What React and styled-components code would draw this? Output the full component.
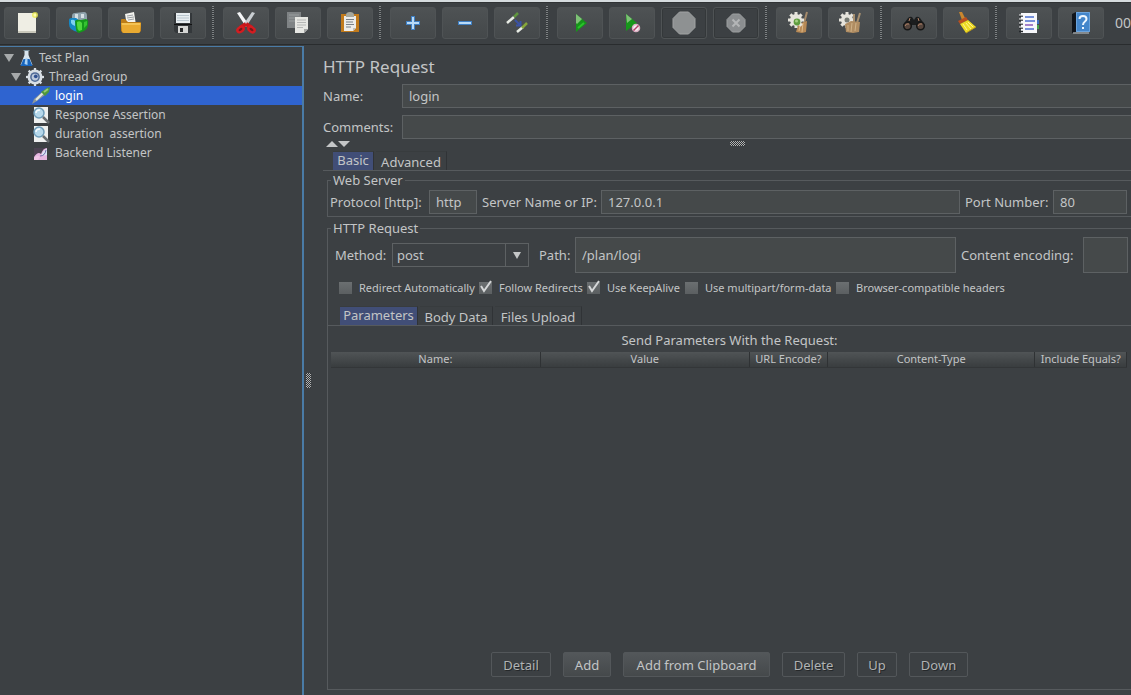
import React from "react";
import styled, { createGlobalStyle, css } from "styled-components";

const c = {
  bg: "#3c4043",
  field: "#45494a",
  line: "#565a5d",
  dark: "#303336",
  text: "#c3c5c6",
  focus: "#4a7ba6",
  select: "#2f64d0",
  tab: "#414e77",
};

const Global = createGlobalStyle`
  *, *::before, *::after { box-sizing: border-box; }
  body {
    margin: 0;
    background: ${c.bg};
    color: ${c.text};
    font: 13px/18px "Noto Sans", "Open Sans", sans-serif;
  }
  button, input, select { font: inherit; color: inherit; }
`;

const Window = styled.div`
  display: flex;
  flex-direction: column;
  min-height: 100vh;
  overflow: hidden;
  border-top: 2px solid #d5dbde;
`;

/* ---------- toolbar ---------- */
const Toolbar = styled.header`
  display: flex;
  align-items: center;
  gap: 6px;
  height: 43px;
  padding: 0 0 0 4px;
  overflow: hidden;
  border-bottom: 1px solid #292c2e;
  box-shadow: inset 0 1px 0 #303335;
`;

const ToolButton = styled.button`
  flex: none;
  display: flex;
  align-items: center;
  justify-content: center;
  width: 46px;
  height: 32px;
  padding: 0;
  border: 1px solid #4f5355;
  border-radius: 3px;
  background: linear-gradient(#4e5254, #44484a);
  ${(p) => p.disabled && css`background: ${c.bg}; box-shadow: inset 0 0 0 1px #34383a;`}
`;

const Separator = styled.span`
  flex: none;
  width: 5px;
  height: 34px;
  background: repeating-linear-gradient(#7d8183 0 1px, #33373a 1px 2px) 0 0 / 2px 100% no-repeat;
`;

const Timer = styled.output`
  flex: none;
  padding-left: 5px;
  font-size: 14px;
`;

const Svg = styled.svg`
  display: block;
  flex: none;
`;

/* ---------- split body ---------- */
const Body = styled.div`
  flex: 1;
  display: flex;
  min-height: 0;
`;

const TreePane = styled.nav`
  flex: none;
  width: 304px;
  margin-top: 1px;
  border: solid ${c.focus};
  border-width: 1px 2px 0 0;
  padding-top: 1px;
`;

const TreeRow = styled.button`
  display: flex;
  align-items: center;
  gap: 5px;
  width: 100%;
  height: 19px;
  padding: 0 0 0 ${(p) => p.$indent}px;
  border: 0;
  background: ${(p) => (p.$active ? c.select : "transparent")};
  color: ${(p) => (p.$active ? "#fff" : c.text)};
  font-size: 12px;
  white-space: pre;
  text-align: left;
`;

const Splitter = styled.div`
  flex: none;
  width: 19px;
  display: flex;
  align-items: center;
  padding: 20px 0 0 2px;
`;

const Grip = styled.span`
  width: ${(p) => (p.$across ? 15 : 5)}px;
  height: ${(p) => (p.$across ? 5 : 15)}px;
  background: repeating-conic-gradient(#b0b2b3 0 25%, #2e3133 0 50%) 0 0 / 2px 2px;
`;

const Editor = styled.main`
  flex: 1;
  min-width: 0;
  display: flex;
  flex-direction: column;
  padding-top: 10px;
`;

const Title = styled.h1`
  margin: 0 0 5px;
  font-size: 17px;
  line-height: 24px;
  font-weight: 400;
`;

const FormRow = styled.div`
  display: flex;
  align-items: center;
  margin-bottom: ${(p) => (p.$last ? 0 : 7)}px;
`;

const Label = styled.label`
  flex: none;
  width: ${(p) => p.$w}px;
  white-space: nowrap;
`;

const Field = styled.input`
  flex: ${(p) => (p.$w ? "none" : "1")};
  width: ${(p) => (p.$w ? p.$w + "px" : "auto")};
  min-width: 0;
  height: ${(p) => (p.$tall ? 36 : 24)}px;
  margin-right: ${(p) => p.$gap || 0}px;
  padding: 0 6px;
  border: 1px solid #5d6163;
  border-right-width: ${(p) => (p.$bleed ? 0 : 1)}px;
  background: ${c.field};
  outline: 0;
`;

const Divider = styled.div`
  display: flex;
  align-items: flex-start;
  height: 12px;
  padding-left: 3px;
`;

const GripSlot = styled.span`
  flex: 1;
  display: flex;
  justify-content: center;
  padding: 2px 6px 0 0;
`;

/* ---------- tabs ---------- */
const Tabs = styled.div`
  display: flex;
  align-items: flex-end;
  gap: 2px;
  padding: 0 0 0 ${(p) => p.$inset}px;
  border-bottom: 1px solid ${c.line};
`;

const Tab = styled.button`
  height: 19px;
  width: ${(p) => p.$w}px;
  padding: ${(p) => (p.$active ? "0 0 2px" : "1px 0 0")};
  border: 0;
  border-right: 1px solid ${c.dark};
  border-top: 1px solid #383c3e;
  background: ${(p) => (p.$active ? c.tab : "transparent")};
  line-height: 16px;
  white-space: nowrap;
`;

/* ---------- groups ---------- */
const Group = styled.fieldset`
  margin: ${(p) => p.$margin};
  padding: 0;
  min-width: 0;
  border: 1px solid ${c.line};
  border-right: 0;
  ${(p) => p.$fill && css`flex: 1; display: flex; flex-direction: column;`}
`;

const Legend = styled.legend`
  margin-left: 3px;
  padding: 0 2px;
`;

const ServerRow = styled.div`
  display: flex;
  align-items: center;
  padding: 1px 4px 2px 2px;
`;

const PathRow = styled.div`
  display: flex;
  align-items: center;
  padding: 0 3px 0 7px;
`;

const SelectBox = styled.div`
  flex: none;
  display: grid;
  grid-template-columns: 1fr 22px;
  align-items: center;
  width: 137px;
  height: 24px;
  margin-right: 10px;
  border: 1px solid #5d6163;
`;

const Select = styled.select`
  grid-area: 1 / 1 / 2 / 3;
  height: 22px;
  padding: 0 4px;
  border: 0;
  appearance: none;
  background: linear-gradient(#5d6163, #5d6163) right 22px top / 1px 100% no-repeat;
  outline: 0;
`;

const SelectArrow = styled(Svg)`
  grid-area: 1 / 2 / 2 / 3;
  justify-self: center;
  pointer-events: none;
`;

const Checks = styled.div`
  display: flex;
  height: 16px;
  margin: 7px 0 10px 11px;
`;

const CheckLabel = styled.label`
  display: flex;
  align-items: center;
  gap: 7px;
  width: ${(p) => p.$w}px;
  font-size: 11px;
  line-height: 16px;
  white-space: nowrap;
`;

const Check = styled.input`
  appearance: none;
  flex: none;
  width: 13px;
  height: 12px;
  margin: 0;
  background: linear-gradient(#6b6f71, #5b5f61);
`;

const CheckCell = styled.span`
  display: grid;
  align-items: center;
  > * { grid-area: 1 / 1; }
  svg { pointer-events: none; margin-top: -3px; }
`;

const Caption = styled.div`
  margin: 5px 0 3px;
  text-align: center;
`;

const Table = styled.table`
  width: calc(100% - 7px);
  margin-left: 3px;
  table-layout: fixed;
  border-collapse: collapse;
`;

const Th = styled.th`
  width: ${(p) => p.$w};
  height: 15px;
  padding: 0;
  border-right: 1px solid #2f3234;
  border-bottom: 1px solid #333638;
  background: linear-gradient(#505456, #393d3f);
  font-size: 11px;
  line-height: 14px;
  font-weight: 400;
  white-space: nowrap;
`;

const Actions = styled.div`
  display: flex;
  justify-content: center;
  gap: 12px;
  margin: auto 0 12px;
`;

const Action = styled.button`
  height: 25px;
  width: ${(p) => p.$w}px;
  padding: 0;
  border: 1px solid #53575a;
  border-radius: 2px;
  background: linear-gradient(#53575a, #45494b);
  white-space: nowrap;
  ${(p) => p.disabled && css`background: ${c.bg}; color: #b0b3b4; text-shadow: 1px 1px 0 #25282a;`}
`;

/* ---------- icons ---------- */
const Icon = ({ size = 24, children }) => (
  <Svg width={size} height={size} viewBox="0 0 24 24" fill="none" aria-hidden="true">{children}</Svg>
);

const Gear = ({ cx = 8, cy = 10, r = 6, fill = "#e6e4dc" }) => (
  <g fill={fill}>
    <circle cx={cx} cy={cy} r={r} />
    {[0, 45, 90, 135].map((a) => (
      <rect key={a} x={cx - 1.5} y={cy - r - 2} width="3" height={2 * r + 4} transform={`rotate(${a} ${cx} ${cy})`} />
    ))}
  </g>
);

const NewIcon = () => (
  <Icon>
    <path d="M3 2H21V21H3Z" fill="#efeee4" />
    <path d="M3 20H21V22H3Z" fill="#c9c8bb" />
    <circle cx="20" cy="4" r="3" fill="#e8e84c" opacity=".8" />
    <circle cx="20" cy="4" r="1.5" fill="#fffcae" />
  </Icon>
);
const TemplatesIcon = () => (
  <Icon>
    <path d="M5 5Q5 2 8 2L17 1Q20 1 20 5V11H5Z" fill="#8fa3ad" />
    <path d="M8 3H11V8H8ZM14 3H17V7H14Z" fill="#d5dfe4" />
    <path d="M2 9Q2 7 5 7L9 7Q12 8 11 12V21Q8 21 4 18Q2 16 2 13Z" fill="#1587c4" />
    <path d="M4 9Q7 8 8 10L8 15Q5 14 4 12Z" fill="#7cd1ef" />
    <path d="M8 10Q10 8 14 9L19 8Q22 9 21 13Q21 18 17 20L12 22Q9 21 9 18Z" fill="#14991b" />
    <path d="M10 11Q13 9 15 12L15 19L12 20Q10 18 10 14Z" fill="#4fd83e" />
    <path d="M17 11L20 10L20 14L17 17Z" fill="#36c331" />
  </Icon>
);
const OpenIcon = () => (
  <Icon>
    <path d="M6 3L15 1L17 14L8 15Z" fill="#f3f3ef" />
    <path d="M8 5L14 4M8 7L15 6M9 9L15 8" stroke="#9ba1a5" />
    <path d="M2 9Q2 8 3 8H6L9 11H21Q22 11 22 12V20L20 22H4L2 20Z" fill="#bd7d17" />
    <path d="M2 12H22L21 21Q20 22 19 22H5Q3 22 3 20Z" fill="#e9aa31" />
    <path d="M3 13H21" stroke="#ffdc7b" />
  </Icon>
);
const SaveIcon = () => (
  <Icon>
    <path d="M3 2H21V22H5L3 20Z" fill="#34383b" />
    <path d="M5 2H19V12H5Z" fill="#e7edf0" />
    <path d="M6 4.500H18M6 7H18M6 9.500H18" stroke="#b9c6ce" />
    <path d="M7 15H17V22H7Z" fill="#d5d6d4" />
    <path d="M9 17H12V21H9Z" fill="#282a2c" />
    <path d="M3 13.500H21" stroke="#111" />
  </Icon>
);
const CutIcon = () => (
  <Icon>
    <path d="M3 2L6 1L15 14L12 16Z" fill="#f5f6f7" />
    <path d="M21 2L18 1L9 14L12 16Z" fill="#c9ced2" />
    <path d="M12 13L6 17M12 13L18 17" stroke="#c8171b" strokeWidth="4" />
    <ellipse cx="6.500" cy="18.500" rx="3.400" ry="2.300" fill="#701a1c" stroke="#d51c20" strokeWidth="2.400" transform="rotate(-35 6.500 18.500)" />
    <ellipse cx="17.500" cy="18.500" rx="3.400" ry="2.300" fill="#701a1c" stroke="#d51c20" strokeWidth="2.400" transform="rotate(35 17.500 18.500)" />
  </Icon>
);
const CopyIcon = () => (
  <Icon>
    <path d="M1 1H15V17H1Z" fill="#7f8385" />
    <path d="M3 4H13M3 7H11M3 10H9" stroke="#9a9e9f" />
    <path d="M9 6H22V18L18 22H9Z" fill="#e6e7e3" />
    <path d="M11 9H20M11 11.500H20M11 14H20M11 16.500H17" stroke="#b4b6b5" />
    <path d="M18 22V18H22Z" fill="#a4a6a5" />
  </Icon>
);
const PasteIcon = () => (
  <Icon>
    <path d="M3 3H21V21H3Z" fill="#c17b1d" />
    <path d="M6 5H18V17L15 20H6Z" fill="#ececea" />
    <path d="M8 4Q8 1 12 1Q16 1 16 4V6H8Z" fill="#a7a89d" />
    <path d="M8 8.500H16M8 11H15M8 13.500H16M8 16H13" stroke="#798086" />
    <path d="M15 20V17H18Z" fill="#bfc0bd" />
  </Icon>
);
const PlusIcon = () => (
  <Icon>
    <path d="M12 5V19M5 12H19" stroke="#3f7fc3" strokeWidth="4" />
    <path d="M12 6V18M6 12H18" stroke="#b8daf7" strokeWidth="2" />
  </Icon>
);
const MinusIcon = () => (
  <Icon>
    <path d="M5 12H19" stroke="#3f7fc3" strokeWidth="4" />
    <path d="M6 12H18" stroke="#b8daf7" strokeWidth="2" />
  </Icon>
);
const ToggleIcon = () => (
  <Icon>
    <path d="M2 12L9 6" stroke="#e8ece5" strokeWidth="2.500" />
    <path d="M9 6L13 2" stroke="#60963f" strokeWidth="2.500" />
    <path d="M12 21L18 16" stroke="#e8ece5" strokeWidth="2.500" />
    <path d="M17 17L22 12" stroke="#86a53b" strokeWidth="2.500" />
    <path d="M10 9L15 14M15.500 10V14.500H11" stroke="#3b53a5" strokeWidth="2" />
  </Icon>
);
const StartIcon = () => (
  <Icon>
    <path d="M8 3L19 12L8 21Z" fill="#16951a" />
    <path d="M8 3L14 8L9 13L8 12Z" fill="#7fc177" />
    <path d="M10 17L16 12" stroke="#29c32a" strokeWidth="2" />
  </Icon>
);
const NoPauseIcon = () => (
  <Icon>
    <path d="M6 3L17 12L6 20Z" fill="#17971b" />
    <path d="M6 3L12 8L7 12Z" fill="#7fc177" />
    <circle cx="16" cy="17" r="3.500" fill="#f3f0f1" stroke="#d9b0c3" strokeWidth="1.500" />
    <path d="M13.500 19.500L18.500 14.500" stroke="#b53d68" strokeWidth="1.500" />
  </Icon>
);
const StopIcon = () => (
  <Icon>
    <path d="M7.500 1H16.500L23 7.500V16.500L16.500 23H7.500L1 16.500V7.500Z" fill="#8e9192" stroke="#a0a2a3" />
  </Icon>
);
const ShutdownIcon = () => (
  <Icon>
    <path d="M8.500 3H15.500L21 8.500V15.500L15.500 21H8.500L3 15.500V8.500Z" fill="#8b8e90" stroke="#9c9fa0" />
    <path d="M8.500 8.500L15.500 15.500M15.500 8.500L8.500 15.500" stroke="#b4b6b7" strokeWidth="2" />
  </Icon>
);
const Broom = () => (
  <g>
    <path d="M20 1L17 12" stroke="#a58a6a" strokeWidth="2" />
    <path d="M11 14L14 12L20 10L19 21L15 22L9 21Z" fill="#b88a56" />
    <path d="M13 14L12 20M16 12L15 21" stroke="#dcb98a" />
  </g>
);
const ClearIcon = () => (
  <Icon>
    <Broom />
    <Gear cx={9} cy={9} r={6} />
    <circle cx="10" cy="11" r="3.400" fill="#5f9d3f" />
    <circle cx="9.500" cy="10" r="1.500" fill="#a5cf83" />
  </Icon>
);
const ClearAllIcon = () => (
  <Icon>
    <Gear cx={8} cy={9} r={6} />
    <circle cx="8" cy="9" r="2.500" fill="#777b74" />
    <path d="M15 3L15 11M21 2L18 12" stroke="#a89070" strokeWidth="2" />
    <path d="M6 13L12 10L21 11L20 21L14 22L7 21Z" fill="#b08d62" />
    <path d="M9 14L9 20M13 12L12 21M17 12L16 20" stroke="#cfb288" />
  </Icon>
);
const SearchIcon = () => (
  <Icon>
    <path d="M6 7Q8 5 10 6L12 9L14 6Q16 5 18 7L23 14L19 17L14 14H10L5 17L1 14Z" fill="#1b1d1e" />
    <circle cx="5.500" cy="15" r="3.800" fill="#55453d" stroke="#151616" strokeWidth="1.500" />
    <circle cx="18.500" cy="15" r="3.800" fill="#55453d" stroke="#151616" strokeWidth="1.500" />
    <path d="M3 15Q4 12 7 13M16 15Q17 12 20 13M8 7L7 10M16 7L17 10" stroke="#b28266" />
  </Icon>
);
const ResetSearchIcon = () => (
  <Icon>
    <path d="M5 1L8 1L11 7L8 9Z" fill="#c9862e" />
    <path d="M4 10L12 6L14 9L6 13Z" fill="#ba4e1e" />
    <path d="M6 13L14 9L22 16L12 22Z" fill="#edda25" />
    <path d="M9 13L13 19M12 12L17 18M14 11L19 16" stroke="#fff38d" />
    <path d="M12 22L22 16" stroke="#ba9a18" />
  </Icon>
);
const FunctionIcon = () => (
  <Icon>
    <path d="M4 2H20V22H4Z" fill="#f6f7fa" />
    <path d="M8 6H17M8 10H18M8 18H17" stroke="#4b6fd0" strokeWidth="1.500" />
    <path d="M8 14H16" stroke="#8a59b8" strokeWidth="1.500" />
    <path d="M2 5H6M2 9H6M2 13H6M2 17H6M2 20.500H6" stroke="#24282c" strokeWidth="1.500" />
    <path d="M2 4H6M2 8H6M2 12H6M2 16H6" stroke="#f5f5f5" />
    <path d="M20 9H22V13H20Z" fill="#3b71c1" />
    <path d="M20 14H22V18H20Z" fill="#45a14c" />
  </Icon>
);
const HelpIcon = () => (
  <Icon>
    <path d="M3 3L7 1V21L3 22Z" fill="#10141b" />
    <path d="M7 1H21V21H7Z" fill="#4486cb" />
    <path d="M7.500 1.500H20.500V20.500H7.500Z" stroke="#6ba3dc" />
    <path d="M10.500 8C10.500 4 17.500 4 17.500 8C17.500 11 14 10 14 14M14 16V18" stroke="#eef7ff" strokeWidth="2" />
    <path d="M4 22H20" stroke="#c4c9cc" />
  </Icon>
);

const FlaskIcon = () => (
  <Svg width="15" height="18" viewBox="0 0 14 18" aria-hidden="true">
    <path d="M5 1H9V6L13 16H1L5 6Z" fill="#d7e4ed" />
    <path d="M4 10H10L13 17H1Z" fill="#1765bd" />
    <path d="M6 9L5 15L8 16L8 9Z" fill="#a9d2f5" />
    <path d="M4 1H10V2H4Z" fill="#76909f" />
  </Svg>
);
const GroupIcon = () => (
  <Icon size={18}>
    <Gear cx={12} cy={12} r={10} fill="#d9dfe5" />
    <circle cx="12" cy="12" r="6.500" fill="#516b96" />
    <circle cx="12" cy="12" r="4.500" fill="#bdc9db" />
    <circle cx="13" cy="11" r="2.500" fill="#315292" />
  </Icon>
);
const SamplerIcon = () => (
  <Svg width="18" height="18" viewBox="0 0 18 18" aria-hidden="true">
    <path d="M0 17L2 12L10 5L13 8L5 14Z" fill="#8b979b" />
    <path d="M4 13L11 6" stroke="#e4e9e0" strokeWidth="2" />
    <path d="M9 5L15 1L18 0L17 5L13 9Z" fill="#4f983b" />
    <path d="M12 5L16 2" stroke="#97ca74" strokeWidth="2" />
  </Svg>
);
const AssertionIcon = () => (
  <Svg width="18" height="18" viewBox="0 0 18 18" aria-hidden="true">
    <path d="M2 1H16V17H2Z" fill="#eef0ef" />
    <circle cx="7" cy="7" r="5" fill="#b6d8eb" stroke="#6f9dba" strokeWidth="1.500" />
    <path d="M4 7C4 5 6 4 8 4" stroke="#f6fcff" fill="none" strokeWidth="1.500" />
    <path d="M11 11L17 17" stroke="#686d70" strokeWidth="2.500" />
  </Svg>
);
const ListenerIcon = () => (
  <Svg width="18" height="18" viewBox="0 0 18 18" aria-hidden="true">
    <path d="M2 4H15V16H2Z" fill="#4b4251" />
    <path d="M2 13Q6 7 9 10Q11 4 15 4V16H2Z" fill="#e5b5e0" />
    <path d="M9 12Q11 6 15 5V11Z" fill="#d7e5f4" />
    <path d="M2 14Q5 10 8 13L6 16H2Z" fill="#f0c6e6" />
    <path d="M8 12Q13 12 14 6" stroke="#7265a8" fill="none" />
  </Svg>
);
const Triangle = ({ up, as: Component = Svg }) => (
  <Component width="12" height="9" viewBox="0 0 12 9" aria-hidden="true">
    <path d={up ? "M0 8H12L6 2Z" : "M0 2H12L6 8Z"} fill="#c4c6c7" />
  </Component>
);
const DropMark = () => (
  <SelectArrow width="8" height="8" viewBox="0 0 8 8" aria-hidden="true">
    <path d="M0 1H8L4 8Z" fill="#c4c6c7" />
  </SelectArrow>
);
const Twisty = () => (
  <Svg width="10" height="10" viewBox="0 0 10 10" aria-hidden="true"><path d="M0 1H10L5 9Z" fill="#a6a9aa" /></Svg>
);

const toolGroups = [
  [["New", NewIcon], ["Templates", TemplatesIcon], ["Open", OpenIcon], ["Save", SaveIcon]],
  [["Cut", CutIcon], ["Copy", CopyIcon], ["Paste", PasteIcon]],
  [["Expand all", PlusIcon], ["Collapse all", MinusIcon], ["Toggle", ToggleIcon]],
  [["Start", StartIcon], ["Start no pauses", NoPauseIcon], ["Stop", StopIcon, true], ["Shutdown", ShutdownIcon, true]],
  [["Clear", ClearIcon], ["Clear all", ClearAllIcon]],
  [["Search", SearchIcon], ["Reset search", ResetSearchIcon]],
  [["Function helper", FunctionIcon], ["Help", HelpIcon]],
];

const tree = [
  { label: "Test Plan", indent: 4, icon: FlaskIcon, open: true },
  { label: "Thread Group", indent: 11, icon: GroupIcon, open: true },
  { label: "login", indent: 32, icon: SamplerIcon, active: true },
  { label: "Response Assertion", indent: 32, icon: AssertionIcon },
  { label: "duration  assertion", indent: 32, icon: AssertionIcon },
  { label: "Backend Listener", indent: 32, icon: ListenerIcon },
];

const options = [
  ["Redirect Automatically", 140, false],
  ["Follow Redirects", 108, true],
  ["Use KeepAlive", 98, true],
  ["Use multipart/form-data", 151, false],
  ["Browser-compatible headers", 170, false],
];

const columns = [
  ["Name:", "26.3%"],
  ["Value", "26.3%"],
  ["URL Encode?", "9.8%"],
  ["Content-Type", "26.1%"],
  ["Include Equals?", "11.5%"],
];

const actions = [
  ["Detail", 60, true],
  ["Add", 48],
  ["Add from Clipboard", 147],
  ["Delete", 63, true],
  ["Up", 40, true],
  ["Down", 59, true],
];

export default function App() {
  return (
    <Window>
      <Global />
      <Toolbar>
        {toolGroups.map((group, i) => (
          <React.Fragment key={i}>
            {i > 0 && <Separator />}
            {group.map(([name, Glyph, off]) => (
              <ToolButton key={name} aria-label={name} disabled={off}><Glyph /></ToolButton>
            ))}
          </React.Fragment>
        ))}
        <Timer>00</Timer>
      </Toolbar>
      <Body>
        <TreePane aria-label="Test plan tree">
          {tree.map(({ label, indent, icon: Glyph, open, active }) => (
            <TreeRow key={label} $indent={indent} $active={active}>
              {open && <Twisty />}
              <Glyph />
              {label}
            </TreeRow>
          ))}
        </TreePane>
        <Splitter><Grip /></Splitter>
        <Editor>
          <Title>HTTP Request</Title>
          <FormRow>
            <Label htmlFor="name" $w={79}>Name:</Label>
            <Field id="name" defaultValue="login" $bleed />
          </FormRow>
          <FormRow $last>
            <Label htmlFor="comments" $w={79}>Comments:</Label>
            <Field id="comments" $bleed />
          </FormRow>
          <Divider>
            <Triangle up />
            <Triangle />
            <GripSlot><Grip $across /></GripSlot>
          </Divider>
          <Tabs $inset={10} role="tablist">
            <Tab role="tab" $active $w={41}>Basic</Tab>
            <Tab role="tab" $w={71}>Advanced</Tab>
          </Tabs>
          <Group $margin="0 0 0 4px">
            <Legend>Web Server</Legend>
            <ServerRow>
              <Label htmlFor="protocol" $w={99}>Protocol [http]:</Label>
              <Field id="protocol" defaultValue="http" $w={48} $gap={5} />
              <Label htmlFor="server" $w={119}>Server Name or IP:</Label>
              <Field id="server" defaultValue="127.0.0.1" $gap={5} />
              <Label htmlFor="port" $w={88}>Port Number:</Label>
              <Field id="port" defaultValue="80" $w={74} />
            </ServerRow>
          </Group>
          <Group $margin="2px 0 5px 4px" $fill>
            <Legend>HTTP Request</Legend>
            <PathRow>
              <Label htmlFor="method" $w={57}>Method:</Label>
              <SelectBox>
                <Select id="method" defaultValue="post">
                  <option>post</option>
                </Select>
                <DropMark />
              </SelectBox>
              <Label htmlFor="path" $w={36}>Path:</Label>
              <Field id="path" defaultValue="/plan/logi" $tall $gap={5} />
              <Label htmlFor="encoding" $w={122}>Content encoding:</Label>
              <Field id="encoding" $w={45} $tall />
            </PathRow>
            <Checks>
              {options.map(([label, w, on]) => (
                <CheckLabel key={label} $w={w}>
                  <CheckCell>
                    <Check type="checkbox" defaultChecked={on} />
                    {on && (
                      <Svg width="13" height="14" viewBox="0 0 13 14" aria-hidden="true">
                        <path d="M2 6L5 11L12 1" stroke="#d5d7d8" strokeWidth="2" fill="none" />
                      </Svg>
                    )}
                  </CheckCell>
                  {label}
                </CheckLabel>
              ))}
            </Checks>
            <Tabs $inset={12} role="tablist">
              <Tab role="tab" $active $w={78}>Parameters</Tab>
              <Tab role="tab" $w={73}>Body Data</Tab>
              <Tab role="tab" $w={87}>Files Upload</Tab>
            </Tabs>
            <Caption>Send Parameters With the Request:</Caption>
            <Table>
              <thead>
                <tr>{columns.map(([label, w]) => <Th key={label} $w={w}>{label}</Th>)}</tr>
              </thead>
            </Table>
            <Actions>
              {actions.map(([label, w, off]) => (
                <Action key={label} $w={w} disabled={off}>{label}</Action>
              ))}
            </Actions>
          </Group>
        </Editor>
      </Body>
    </Window>
  );
}
